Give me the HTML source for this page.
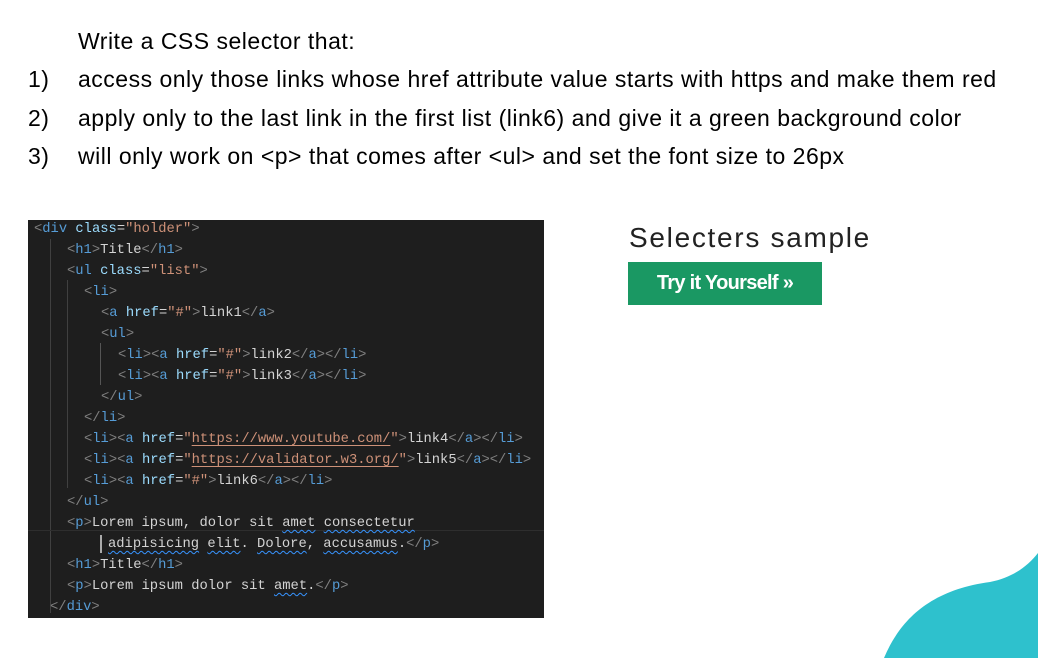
<!DOCTYPE html>
<html><head><meta charset="utf-8"><style>
body{margin:0;width:1038px;height:658px;background:#fff;position:relative;overflow:hidden;font-family:"Liberation Sans",Arial,sans-serif}
.t{position:absolute;font-size:23px;letter-spacing:0.5px;color:#000;white-space:nowrap;line-height:1}
.code{position:absolute;left:28px;top:220px;width:516px;height:398px;background:#1e1e1e;font-family:"Liberation Mono",monospace;font-size:13.8px;color:#d4d4d4}
.l{position:absolute;white-space:pre;line-height:16px;margin-top:2px}
.g{color:#808080}.b{color:#569cd6}.a{color:#9cdcfe}.s{color:#ce9178}
.u{text-decoration:underline;text-decoration-color:#ce9178;text-underline-offset:3px}
.w{text-decoration:underline wavy #3794ff;text-underline-offset:3px;text-decoration-thickness:1px}
.guide{position:absolute;width:1px;background:#404040}
</style></head><body>
<div class="t" style="left:78px;top:30px">Write a CSS selector that:</div>
<div class="t" style="left:28px;top:68px">1)</div><div class="t" style="left:78px;top:68px">access only those links whose href attribute value starts with https and make them red</div>
<div class="t" style="left:28px;top:107px">2)</div><div class="t" style="left:78px;top:107px">apply only to the last link in the first list (link6) and give it a green background color</div>
<div class="t" style="left:28px;top:145px">3)</div><div class="t" style="left:78px;top:145px">will only work on &lt;p&gt; that comes after &lt;ul&gt; and set the font size to 26px</div>

<div class="code">
<div class="guide" style="left:22px;top:19px;height:374px"></div>
<div class="guide" style="left:39px;top:60px;height:208px"></div>
<div class="guide" style="left:72px;top:123px;height:42px;background:#555"></div>
<div class="guide" style="left:0;top:310px;width:516px;height:1px;background:#2e2e2e"></div>
<div class="l" style="left:6px;top:0px"><span class="g">&lt;</span><span class="b">div</span> <span class="a">class</span>=<span class="s">"holder"</span><span class="g">&gt;</span></div>
<div class="l" style="left:39px;top:21px"><span class="g">&lt;</span><span class="b">h1</span><span class="g">&gt;</span>Title<span class="g">&lt;/</span><span class="b">h1</span><span class="g">&gt;</span></div>
<div class="l" style="left:39px;top:42px"><span class="g">&lt;</span><span class="b">ul</span> <span class="a">class</span>=<span class="s">"list"</span><span class="g">&gt;</span></div>
<div class="l" style="left:56px;top:63px"><span class="g">&lt;</span><span class="b">li</span><span class="g">&gt;</span></div>
<div class="l" style="left:73px;top:84px"><span class="g">&lt;</span><span class="b">a</span> <span class="a">href</span>=<span class="s">"#"</span><span class="g">&gt;</span>link1<span class="g">&lt;/</span><span class="b">a</span><span class="g">&gt;</span></div>
<div class="l" style="left:73px;top:105px"><span class="g">&lt;</span><span class="b">ul</span><span class="g">&gt;</span></div>
<div class="l" style="left:90px;top:126px"><span class="g">&lt;</span><span class="b">li</span><span class="g">&gt;&lt;</span><span class="b">a</span> <span class="a">href</span>=<span class="s">"#"</span><span class="g">&gt;</span>link2<span class="g">&lt;/</span><span class="b">a</span><span class="g">&gt;&lt;/</span><span class="b">li</span><span class="g">&gt;</span></div>
<div class="l" style="left:90px;top:147px"><span class="g">&lt;</span><span class="b">li</span><span class="g">&gt;&lt;</span><span class="b">a</span> <span class="a">href</span>=<span class="s">"#"</span><span class="g">&gt;</span>link3<span class="g">&lt;/</span><span class="b">a</span><span class="g">&gt;&lt;/</span><span class="b">li</span><span class="g">&gt;</span></div>
<div class="l" style="left:73px;top:168px"><span class="g">&lt;/</span><span class="b">ul</span><span class="g">&gt;</span></div>
<div class="l" style="left:56px;top:189px"><span class="g">&lt;/</span><span class="b">li</span><span class="g">&gt;</span></div>
<div class="l" style="left:56px;top:210px"><span class="g">&lt;</span><span class="b">li</span><span class="g">&gt;&lt;</span><span class="b">a</span> <span class="a">href</span>=<span class="s">"<span class="u">https://www.youtube.com/</span>"</span><span class="g">&gt;</span>link4<span class="g">&lt;/</span><span class="b">a</span><span class="g">&gt;&lt;/</span><span class="b">li</span><span class="g">&gt;</span></div>
<div class="l" style="left:56px;top:231px"><span class="g">&lt;</span><span class="b">li</span><span class="g">&gt;&lt;</span><span class="b">a</span> <span class="a">href</span>=<span class="s">"<span class="u">https://validator.w3.org/</span>"</span><span class="g">&gt;</span>link5<span class="g">&lt;/</span><span class="b">a</span><span class="g">&gt;&lt;/</span><span class="b">li</span><span class="g">&gt;</span></div>
<div class="l" style="left:56px;top:252px"><span class="g">&lt;</span><span class="b">li</span><span class="g">&gt;&lt;</span><span class="b">a</span> <span class="a">href</span>=<span class="s">"#"</span><span class="g">&gt;</span>link6<span class="g">&lt;/</span><span class="b">a</span><span class="g">&gt;&lt;/</span><span class="b">li</span><span class="g">&gt;</span></div>
<div class="l" style="left:39px;top:273px"><span class="g">&lt;/</span><span class="b">ul</span><span class="g">&gt;</span></div>
<div class="l" style="left:39px;top:294px"><span class="g">&lt;</span><span class="b">p</span><span class="g">&gt;</span>Lorem ipsum, dolor sit <span class="w">amet</span> <span class="w">consectetur</span></div>
<div class="l" style="left:80px;top:315px"><span class="w">adipisicing</span> <span class="w">elit</span>. <span class="w">Dolore</span>, <span class="w">accusamus</span>.<span class="g">&lt;/</span><span class="b">p</span><span class="g">&gt;</span></div>
<div class="guide" style="left:72px;top:315px;height:18px;background:#aaa;width:2px"></div>
<div class="l" style="left:39px;top:336px"><span class="g">&lt;</span><span class="b">h1</span><span class="g">&gt;</span>Title<span class="g">&lt;/</span><span class="b">h1</span><span class="g">&gt;</span></div>
<div class="l" style="left:39px;top:357px"><span class="g">&lt;</span><span class="b">p</span><span class="g">&gt;</span>Lorem ipsum dolor sit <span class="w">amet</span>.<span class="g">&lt;/</span><span class="b">p</span><span class="g">&gt;</span></div>
<div class="l" style="left:22px;top:378px"><span class="g">&lt;/</span><span class="b">div</span><span class="g">&gt;</span></div>
</div>

<div style="position:absolute;left:629px;top:222px;font-size:28px;color:#222;letter-spacing:1.7px;white-space:nowrap">Selecters sample</div>
<div style="position:absolute;left:628px;top:262px;width:194px;height:43px;background:#1a9863;color:#fff;font-weight:bold;font-size:20px;letter-spacing:-0.7px;line-height:43px;text-align:center;white-space:nowrap">Try it Yourself »</div>

<svg style="position:absolute;left:0;top:0" width="1038" height="658"><path d="M884 658 C900 620 930 590 990 582 C1012 578 1028 566 1038 553 L1038 658 Z" fill="#2ec1cd"/></svg>
</body></html>
